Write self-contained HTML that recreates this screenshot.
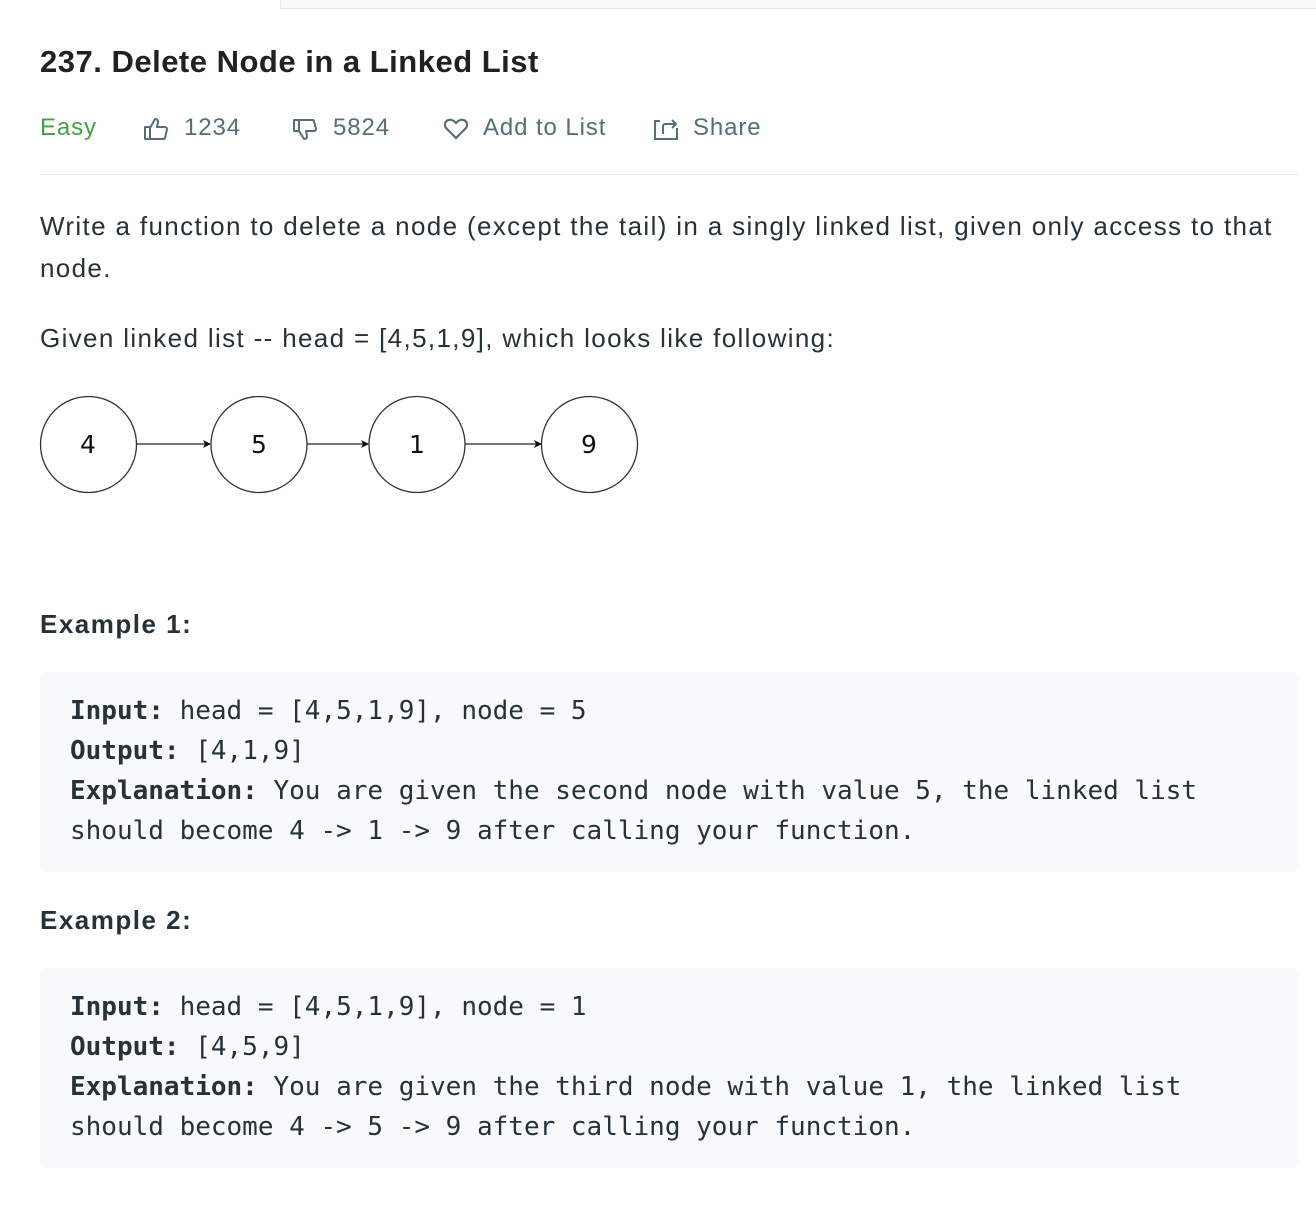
<!DOCTYPE html>
<html><head><meta charset="utf-8"><style>
*{margin:0;padding:0;box-sizing:border-box}
body{width:1316px;height:1216px;background:#fff;font-family:"Liberation Sans",sans-serif;color:#263238;position:relative;overflow:hidden}
.top{position:absolute;left:280px;top:-2px;width:1040px;height:11px;background:#fafafa;border:1px solid #e8e8e8}
h1{position:absolute;left:40px;top:44px;font-size:31px;font-weight:bold;color:#212121;letter-spacing:0.5px}
.meta{position:absolute;top:112px;left:0;font-size:24px;color:#546e7a;height:32px;letter-spacing:0.9px}
.meta span{position:absolute;white-space:nowrap;top:0;line-height:32px}
.meta svg{position:absolute;top:4px}
hr{position:absolute;left:40px;top:174px;width:1258px;border:0;border-top:1px solid #e8e8e8}
p{position:absolute;left:40px;font-size:26px;line-height:42px;width:1262px;color:#263238;letter-spacing:1.35px}
h3{position:absolute;left:40px;font-size:26px;font-weight:bold;color:#263238;letter-spacing:1.5px}
pre{position:absolute;left:40px;width:1258px;height:200px;background:#f7f9fa;border-radius:6px;padding:19px 30px;font-family:"DejaVu Sans Mono","Liberation Mono",monospace;font-size:26px;line-height:40px;color:#263238}
pre b{font-weight:bold}
</style></head><body>
<div class="top"></div>
<h1>237. Delete Node in a Linked List</h1>
<div class="meta">
<span style="left:40px;color:#43a047">Easy</span>
<svg style="left:143px" width="26" height="26" viewBox="0 0 26 26" fill="none" stroke="#546e7a" stroke-width="2" stroke-linejoin="round"><path d="M2 11h5v12H2z M7 12l5-9c2 0 3 1 3 3l-1 5h8c1 0 2 1 2 2l-2 9c0 1-1 1-2 1H7"/></svg>
<span style="left:184px">1234</span>
<svg style="left:292px;top:6px" width="26" height="26" viewBox="0 0 26 26" fill="none" stroke="#546e7a" stroke-width="2" stroke-linejoin="round"><path d="M2 2h5v11H2z M7 2h13c1 0 2 0 2 1l2 8c0 1-1 2-2 2h-8l1 5c0 2-1 3-3 3l-5-8"/></svg>
<span style="left:333px">5824</span>
<svg style="left:443px;top:5px" width="26" height="24" viewBox="0 0 26 24" fill="none" stroke="#546e7a" stroke-width="2.2"><path d="M13 21L3.5 11.5C1 9 1.5 4.5 5 3.2 8 2 11 3.5 13 6c2-2.5 5-4 8-2.8 3.5 1.3 4 5.8 1.5 8.3z"/></svg>
<span style="left:483px">Add to List</span>
<svg style="left:653px" width="26" height="26" viewBox="0 0 26 26" fill="none" stroke="#546e7a" stroke-width="2"><path d="M7 5H2v18h22V12 M10 18v-8c0-1 1-2 2-2h10 M19 4l4 4-4 4"/></svg>
<span style="left:693px">Share</span>
</div>
<hr>
<p style="top:205px">Write a function to delete a node (except the tail) in a singly linked list, given only access to that node.</p>
<p style="top:317px">Given linked list -- head = [4,5,1,9], which looks like following:</p>
<svg style="position:absolute;left:0;top:390px" width="660" height="110" viewBox="0 390 660 110">
<defs><marker id="a" markerWidth="8" markerHeight="8" refX="7" refY="4" orient="auto" markerUnits="userSpaceOnUse"><path d="M0 0L8 4L0 8L2 4z" fill="#111"/></marker></defs>
<g fill="#fff" stroke="#333" stroke-width="1.3">
<ellipse cx="88.5" cy="444.5" rx="48" ry="48"/><ellipse cx="259" cy="444.5" rx="48" ry="48"/><ellipse cx="417" cy="444.5" rx="48" ry="48"/><ellipse cx="589.5" cy="444.5" rx="48" ry="48"/>
</g>
<g stroke="#222" stroke-width="1.3" marker-end="url(#a)"><line x1="137" y1="444" x2="210" y2="444"/><line x1="307" y1="444" x2="368" y2="444"/><line x1="465" y1="444" x2="541" y2="444"/></g>
<g font-family="DejaVu Sans,sans-serif" font-size="25" text-anchor="middle" fill="#111"><text x="88" y="453">4</text><text x="259" y="453">5</text><text x="417" y="453">1</text><text x="589" y="453">9</text></g>
</svg>
<h3 style="top:609px">Example 1:</h3>
<pre style="top:672px"><b>Input:</b> head = [4,5,1,9], node = 5
<b>Output:</b> [4,1,9]
<b>Explanation:</b> You are given the second node with value 5, the linked list
should become 4 -&gt; 1 -&gt; 9 after calling your function.</pre>
<h3 style="top:905px">Example 2:</h3>
<pre style="top:968px"><b>Input:</b> head = [4,5,1,9], node = 1
<b>Output:</b> [4,5,9]
<b>Explanation:</b> You are given the third node with value 1, the linked list
should become 4 -&gt; 5 -&gt; 9 after calling your function.</pre>
</body></html>
